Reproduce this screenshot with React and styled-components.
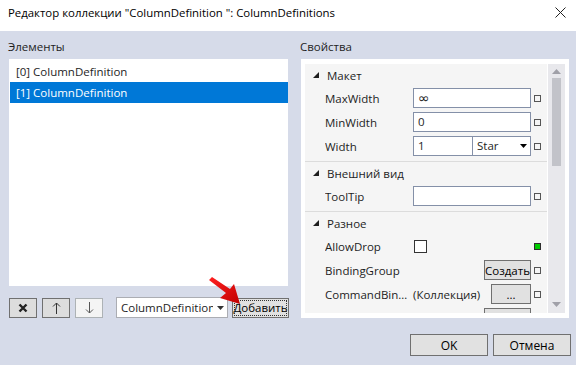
import React from "react";
import styled, { createGlobalStyle } from "styled-components";

const Global = createGlobalStyle`
  html, body { margin: 0; padding: 0; background: #d6dbe9; }
  * { box-sizing: border-box; }
  body { font-family: "Open Sans", "Noto Sans", sans-serif; font-size: 11.5px; color: #1e1e1e; }
`;

const Window = styled.div`
  position: relative;
  width: 576px;
  height: 365px;
  background: #d6dbe9;
  display: flex;
  flex-direction: column;
  overflow: hidden;
`;

const TitleBar = styled.div`
  height: 31px;
  background: #ffffff;
  display: flex;
  align-items: center;
  justify-content: space-between;
  padding: 0 10px 6px 8px;
  font-size: 11.4px;
  color: #000;
`;

const Content = styled.div`
  display: grid;
  grid-template-columns: 281px 269px;
  column-gap: 11px;
  padding-left: 8px;
`;

const Column = styled.div`
  display: flex;
  flex-direction: column;
`;

const GroupLabel = styled.div`
  height: 16px;
  line-height: 16px;
  margin-top: 8px;
  margin-bottom: 4px;
`;

const ListBox = styled.div`
  margin-left: 1px;
  width: 279px;
  height: 227px;
  background: #fff;
  padding: 2px 0 0 1px;
`;

const ListItem = styled.div`
  height: 21px;
  line-height: 21px;
  padding-left: 6px;
  background: ${(p) => (p.$selected ? "#0078d7" : "transparent")};
  color: ${(p) => (p.$selected ? "#fff" : "#1e1e1e")};
`;

const Toolbar = styled.div`
  display: flex;
  align-items: center;
  margin-top: 11px;
  margin-left: 1px;
  height: 21px;
`;

const IconButton = styled.div`
  width: 28px;
  height: 20px;
  margin-right: 5px;
  display: flex;
  align-items: center;
  justify-content: center;
  background: ${(p) => (p.$disabled ? "#f4f4f4" : "#dddddd")};
  border: 1px solid ${(p) => (p.$disabled ? "#adb2b5" : "#707070")};
`;

const Combo = styled.div`
  margin-left: 8px;
  width: 112px;
  height: 21px;
  background: #fff;
  border: 1px solid #abadb3;
  display: flex;
  align-items: center;
  padding-left: 4px;
  position: relative;
`;

const ComboText = styled.span`
  flex: 1;
  overflow: hidden;
  white-space: nowrap;
`;

const ComboArrow = styled.span`
  width: 14px;
  display: flex;
  justify-content: center;
`;

const Button = styled.div`
  height: ${(p) => p.$h || 20}px;
  width: ${(p) => p.$w}px;
  background: #e1e1e1;
  border: 1px solid #707070;
  display: flex;
  align-items: center;
  justify-content: center;
  color: #000;
  position: relative;
  margin-left: ${(p) => p.$ml || 0}px;
`;

const FocusRect = styled.span`
  position: absolute;
  inset: 1px;
  border: 1px dotted #333;
`;

const PropPanel = styled.div`
  margin-left: 1px;
  width: 268px;
  height: 259px;
  background: #fff;
  padding: 5px 4px 5px 4px;
  display: flex;
`;

const PropGrid = styled.div`
  width: 242px;
  background: #f5f5f5;
  overflow: hidden;
  margin-right: 1px;
`;

const Scrollbar = styled.div`
  width: 17px;
  background: #e8e8ec;
  display: flex;
  flex-direction: column;
  align-items: center;
  padding-top: 5px;
`;

const Thumb = styled.div`
  width: 9px;
  height: 88px;
  background: #c2c3c9;
  margin-top: 4px;
`;

const ScrollSpacer = styled.div`
  flex: 1;
`;

const Section = styled.div`
  padding-bottom: ${(p) => (p.$last ? 0 : 3)}px;
  border-bottom: ${(p) => (p.$last ? "none" : "1px solid #dcdcdc")};
`;

const Category = styled.div`
  height: 22px;
  display: flex;
  align-items: center;
  padding-left: 8px;
  gap: 8px;
`;

const Row = styled.div`
  height: 24px;
  display: grid;
  grid-template-columns: 88px 118px 10px;
  align-items: center;
  padding-left: 20px;
`;

const PropName = styled.span`
  white-space: nowrap;
  overflow: hidden;
`;

const Value = styled.div`
  display: flex;
  align-items: center;
  justify-content: ${(p) => p.$justify || "flex-start"};
  height: 20px;
`;

const TextBox = styled.div`
  flex: ${(p) => (p.$w ? "none" : 1)};
  width: ${(p) => (p.$w ? p.$w + "px" : "auto")};
  height: 20px;
  background: #fff;
  border: 1px solid #8490a8;
  padding-left: 4px;
  display: flex;
  align-items: center;
  line-height: 18px;
`;

const Infinity = styled.span`
  font-size: 14px;
  font-family: "DejaVu Sans", sans-serif;
  line-height: 18px;
`;

const StarCombo = styled(TextBox)`
  margin-left: -1px;
  justify-content: space-between;
  padding-right: 3px;
`;

const Marker = styled.span`
  width: 7px;
  height: 7px;
  margin-left: 3px;
  border: 1px solid ${(p) => (p.$green ? "#2d2d2d" : "#555")};
  background: ${(p) => (p.$green ? "#00cc00" : "transparent")};
`;

const CheckBox = styled.span`
  width: 13px;
  height: 13px;
  margin-left: 1px;
  background: #fff;
  border: 1px solid #333;
`;

const ValueText = styled.span`
  flex: 1;
`;

const Footer = styled.div`
  margin-top: auto;
  padding: 0 5px 9px 0;
  display: flex;
  justify-content: flex-end;
  gap: 5px;
`;

const FooterButton = styled.div`
  width: ${(p) => p.$w}px;
  height: 22px;
  background: #e1e1e1;
  border: 1px solid #707070;
  display: flex;
  align-items: center;
  justify-content: center;
  color: #000;
  font-size: 12px;
`;

const ArrowOverlay = styled.svg`
  position: absolute;
  left: 205px;
  top: 274px;
`;

const Tri = () => (
  <svg width="6" height="6" viewBox="0 0 6 6">
    <polygon points="6,0 6,6 0,6" fill="#1e1e1e" />
  </svg>
);

const Down = ({ color = "#000" }) => (
  <svg width="7" height="4" viewBox="0 0 7 4">
    <polygon points="0,0 7,0 3.5,4" fill={color} />
  </svg>
);

const PropRow = ({ name, children, justify, green }) => (
  <Row>
    <PropName>{name}</PropName>
    <Value $justify={justify}>{children}</Value>
    <Marker $green={green} />
  </Row>
);

export default function App() {
  return (
    <Window>
      <Global />
      <TitleBar>
        <span>Редактор коллекции "ColumnDefinition ": ColumnDefinitions</span>
        <svg width="11" height="11" viewBox="0 0 11 11">
          <path d="M0.5 0.5 L10.5 10.5 M10.5 0.5 L0.5 10.5" stroke="#222" strokeWidth="1" />
        </svg>
      </TitleBar>
      <Content>
        <Column>
          <GroupLabel>Элементы</GroupLabel>
          <ListBox>
            <ListItem>[0] ColumnDefinition</ListItem>
            <ListItem $selected>[1] ColumnDefinition</ListItem>
          </ListBox>
          <Toolbar>
            <IconButton>
              <svg width="10" height="10" viewBox="0 0 10 10">
                <path d="M1.5 1.5 L8.5 8.5 M8.5 1.5 L1.5 8.5" stroke="#222" strokeWidth="2.4" />
              </svg>
            </IconButton>
            <IconButton>
              <svg width="9" height="12" viewBox="0 0 9 12">
                <path d="M4.5 1 V12 M1 4.5 L4.5 1 L8 4.5" stroke="#333" strokeWidth="1" fill="none" />
              </svg>
            </IconButton>
            <IconButton $disabled>
              <svg width="9" height="12" viewBox="0 0 9 12">
                <path d="M4.5 0 V11 M1 7.5 L4.5 11 L8 7.5" stroke="#555" strokeWidth="1" fill="none" />
              </svg>
            </IconButton>
            <Combo>
              <ComboText>ColumnDefinition</ComboText>
              <ComboArrow>
                <Down color="#333" />
              </ComboArrow>
            </Combo>
            <Button $w={57} $ml={4}>
              <FocusRect />
              Добавить
            </Button>
          </Toolbar>
        </Column>
        <Column>
          <GroupLabel>Свойства</GroupLabel>
          <PropPanel>
            <PropGrid>
              <Section>
                <Category>
                  <Tri />
                  <span>Макет</span>
                </Category>
                <PropRow name="MaxWidth">
                  <TextBox>
                    <Infinity>∞</Infinity>
                  </TextBox>
                </PropRow>
                <PropRow name="MinWidth">
                  <TextBox>0</TextBox>
                </PropRow>
                <PropRow name="Width">
                  <TextBox $w={60}>1</TextBox>
                  <StarCombo $w={59}>
                    <span>Star</span>
                    <Down />
                  </StarCombo>
                </PropRow>
              </Section>
              <Section>
                <Category>
                  <Tri />
                  <span>Внешний вид</span>
                </Category>
                <PropRow name="ToolTip">
                  <TextBox />
                </PropRow>
              </Section>
              <Section $last>
                <Category>
                  <Tri />
                  <span>Разное</span>
                </Category>
                <PropRow name="AllowDrop" green>
                  <CheckBox />
                </PropRow>
                <PropRow name="BindingGroup" justify="flex-end">
                  <Button $w={47}>Создать</Button>
                </PropRow>
                <PropRow name="CommandBin…">
                  <ValueText>(Коллекция)</ValueText>
                  <Button $w={40}>...</Button>
                </PropRow>
                <PropRow name="" justify="flex-end">
                  <Button $w={47} />
                </PropRow>
              </Section>
            </PropGrid>
            <Scrollbar>
              <svg width="9" height="5" viewBox="0 0 9 5">
                <polygon points="0,5 9,5 4.5,0" fill="#a0a0a8" />
              </svg>
              <Thumb />
              <ScrollSpacer />
              <svg width="9" height="5" viewBox="0 0 9 5" style={{ marginBottom: 6 }}>
                <polygon points="0,0 9,0 4.5,5" fill="#a0a0a8" />
              </svg>
            </Scrollbar>
          </PropPanel>
        </Column>
      </Content>
      <Footer>
        <FooterButton $w={78}>OK</FooterButton>
        <FooterButton $w={78}>Отмена</FooterButton>
      </Footer>
      <ArrowOverlay width="40" height="34" viewBox="0 0 40 34">
        <defs>
          <linearGradient id="ar" x1="0" y1="0" x2="1" y2="1">
            <stop offset="0" stopColor="#ff2020" />
            <stop offset="1" stopColor="#c00000" />
          </linearGradient>
        </defs>
        <polygon points="4,6 7,3 25,15 29,10 35,30 15,24 21,19" fill="url(#ar)" />
      </ArrowOverlay>
    </Window>
  );
}
